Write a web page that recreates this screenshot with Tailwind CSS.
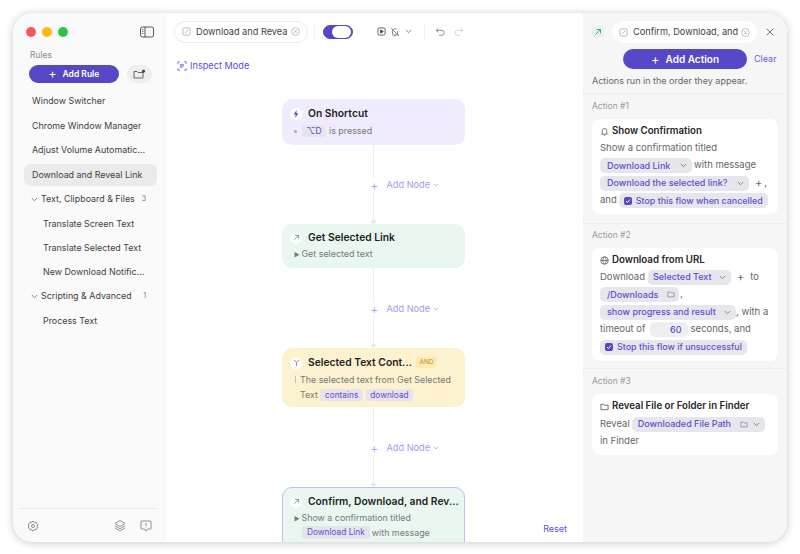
<!DOCTYPE html>
<html>
<head>
    <title>Flow editor</title>
    <script src="https://cdn.jsdelivr.net/npm/@tailwindcss/browser@4"></script>
</head>
<body class="bg-white">
<div class="w-[800px] h-[554px] pt-[13px] pr-[13px] pb-[12px] pl-[13px] font-['Inter','Liberation_Sans',sans-serif] text-[#3f3f3f] overflow-hidden">
<div class="flex h-[529px] rounded-[20px] overflow-hidden bg-white shadow-[0_1px_8px_rgba(0,0,0,0.22)]">

    <!-- sidebar -->
    <aside class="w-[150px] shrink-0 flex flex-col bg-[#fafafa] shadow-[1px_0_5px_rgba(0,0,0,0.07)] z-10">
        <div class="flex items-center h-[36px] pt-[1px] pl-[13px] pr-[9px]">
            <span class="w-[10px] h-[10px] rounded-full bg-[#f9555c]"></span>
            <span class="w-[10px] h-[10px] rounded-full bg-[#fdb90c] ml-[6px]"></span>
            <span class="w-[10px] h-[10px] rounded-full bg-[#2ec445] ml-[6px]"></span>
            <svg class="ml-auto" width="14" height="12" viewBox="0 0 14 12" fill="none" stroke="#555" stroke-width="1"><rect x="0.5" y="1" width="13" height="10" rx="2"/><path d="M5 1v10"/><path d="M2 3.5h1.5M2 5.500h1.500M2 7.500h1.500" stroke-width="0.8"/></svg>
        </div>
        <div class="text-[8.5px] leading-[12px] text-[#8a8a8a] pl-[17px]">Rules</div>
        <div class="flex items-center pl-[16px] mt-[4px]">
            <button class="w-[90px] h-[18px] rounded-full bg-[#5647c6] text-white text-[8.5px] font-semibold flex items-center justify-center gap-[6px]"><span class="text-[12px] font-normal leading-none">+</span>Add Rule</button>
            <div class="w-[25px] h-[18px] ml-[8px] rounded-full bg-[#eeeeee] flex items-center justify-center">
                <svg width="13" height="10" viewBox="0 0 13 10" fill="none" stroke="#444" stroke-width="0.8"><path d="M1 2.500V9h9V3.500H5L4 2.500H1z"/><circle cx="10.500" cy="2.200" r="1.200" fill="#444"/></svg>
            </div>
        </div>
        <nav class="mt-[6px] pl-[11px] pr-[6px] text-[8.9px] leading-[24.5px] whitespace-nowrap">
            <div class="pl-[8px]">Window Switcher</div>
            <div class="pl-[8px]">Chrome Window Manager</div>
            <div class="pl-[8px]">Adjust Volume Automatic...</div>
            <div class="pl-[8px] h-[22px] leading-[22px] mt-[1px] rounded-[6px] bg-[#ebebeb]">Download and Reveal Link</div>
            <div class="flex items-center h-[24px] mt-[2px] pl-[7px] pr-[11px]">
                <svg width="7" height="5" viewBox="0 0 7 5" fill="none" stroke="#777" stroke-width="0.9"><path d="M.8 1l2.700 2.700L6.200 1"/></svg>
                <span class="ml-[3px]">Text, Clipboard &amp; Files</span>
                <span class="ml-auto text-[7px] text-[#777]">3</span>
            </div>
            <div class="pl-[19px] h-[24px]">Translate Screen Text</div>
            <div class="pl-[19px] h-[24px]">Translate Selected Text</div>
            <div class="pl-[19px] h-[24px]">New Download Notific...</div>
            <div class="flex items-center h-[25px] pl-[7px] pr-[11px]">
                <svg width="7" height="5" viewBox="0 0 7 5" fill="none" stroke="#777" stroke-width="0.9"><path d="M.8 1l2.700 2.700L6.200 1"/></svg>
                <span class="ml-[3px]">Scripting &amp; Advanced</span>
                <span class="ml-auto text-[7px] text-[#777]">1</span>
            </div>
            <div class="pl-[19px] h-[24px]">Process Text</div>
        </nav>
        <div class="mt-auto h-[34px] mx-[6px] border-t border-[#ececec] flex items-center pl-[8px] pr-[5px] text-[#666]">
            <svg width="12" height="12" viewBox="0 0 24 24" fill="none" stroke="#777" stroke-width="1.6"><circle cx="12" cy="12" r="3"/><path d="M12 2l2.200 2.600 3.400-.5 1 3.300 3.100 1.400-1.200 3.200 1.200 3.200-3.100 1.400-1 3.300-3.400-.5L12 22l-2.200-2.600-3.400.5-1-3.300-3.100-1.400 1.200-3.200-1.200-3.200 3.100-1.400 1-3.300 3.400.5z"/></svg>
            <svg class="ml-auto" width="12" height="13" viewBox="0 0 24 24" fill="none" stroke="#777" stroke-width="1.6"><path d="M12 2L2 8l10 6 10-6z"/><path d="M2 12.500l10 6 10-6M2 17l10 6 10-6"/></svg>
            <svg class="ml-[14px]" width="12" height="12" viewBox="0 0 24 24" fill="none" stroke="#777" stroke-width="1.6"><path d="M3 2h18a1 1 0 0 1 1 1v14a1 1 0 0 1-1 1h-6l-3 4-3-4H3a1 1 0 0 1-1-1V3a1 1 0 0 1 1-1z"/><path d="M12 6v6M12 14.500v1"/></svg>
        </div>
    </aside>

    <!-- canvas -->
    <main class="w-[420px] shrink-0 relative bg-white">
        <div class="flex items-center h-[36px] pt-[1px] pl-[11px]">
            <div class="w-[134px] h-[22px] rounded-full border border-[#ececec] flex items-center pl-[7px] pr-[7px] text-[9.2px]">
                <svg width="9" height="9" viewBox="0 0 10 10" fill="none" stroke="#aaa" stroke-width="0.9"><rect x="1" y="1" width="8" height="8" rx="1.500"/><path d="M3.500 6.500L7 3"/></svg>
                <span class="ml-[5px] whitespace-nowrap">Download and Revea</span>
                <svg class="ml-auto" width="9" height="9" viewBox="0 0 10 10" fill="none" stroke="#aaa" stroke-width="0.8"><circle cx="5" cy="5" r="4.300"/><path d="M3.400 3.400l3.200 3.200M6.600 3.400L3.400 6.600"/></svg>
            </div>
            <span class="w-px h-[14px] bg-[#f3f3f3] ml-[6px]"></span>
            <div class="w-[30px] h-[14px] ml-[8px] rounded-full bg-[#5647c6] border border-[#5647c6] flex justify-end items-center pr-[1px]">
                <span class="w-[19px] h-[12px] rounded-full bg-white"></span>
            </div>
            <svg class="ml-[24px]" width="9" height="9" viewBox="0 0 10 10" fill="none" stroke="#444" stroke-width="0.9"><rect x="1" y="1" width="8" height="8" rx="1.500"/><path d="M4 3.200l3 1.800-3 1.800z" fill="#444"/></svg>
            <svg class="ml-[4px]" width="10" height="10" viewBox="0 0 24 24" fill="none" stroke="#666" stroke-width="1.800"><path d="M6 17V10a6 6 0 0 1 10-4.500M18 10v7l2 2H5M10 21h4M3 3l18 18"/></svg>
            <svg class="ml-[5px]" width="7" height="5" viewBox="0 0 7 5" fill="none" stroke="#777" stroke-width="0.9"><path d="M.8 1l2.700 2.700L6.200 1"/></svg>
            <span class="w-px h-[14px] bg-[#f0f0f0] ml-[12px]"></span>
            <svg class="ml-[10px]" width="10" height="10" viewBox="0 0 12 12" fill="none" stroke="#777" stroke-width="1"><path d="M4 1.500L1.500 4 4 6.500M1.500 4H8a3 3 0 0 1 0 6H5"/></svg>
            <svg class="ml-[9px]" width="10" height="10" viewBox="0 0 12 12" fill="none" stroke="#ccc" stroke-width="1"><path d="M8 1.500L10.500 4 8 6.500M10.500 4H4a3 3 0 0 0 0 6h3"/></svg>
        </div>
        <div class="flex items-center h-[14px] mt-[10px] pl-[14px] text-[9.2px] text-[#5b4fd0]">
            <svg width="10" height="10" viewBox="0 0 12 12" fill="none" stroke="#6a5fd8" stroke-width="1"><path d="M1 3.500V1h2.500M8.500 1H11v2.500M11 8.500V11H8.500M3.500 11H1V8.500"/><path d="M3.500 4.500h5M3.500 6h5M3.500 7.500h3"/></svg>
            <span class="ml-[3px]">Inspect Mode</span>
        </div>

        <!-- flow: nodes sit in one column with a connector between them -->
        <div class="flex flex-col items-center w-[183px] ml-[119px] mt-[26px]">
            <div class="w-full h-[46px] rounded-[10px] bg-[#f0ecfd] pt-[6px] pl-[8px]">
                <div class="flex items-center h-[17px]">
                    <span class="w-[12px] h-[12px] rounded-full bg-white flex items-center justify-center">
                        <svg width="6" height="8" viewBox="0 0 6 8"><path d="M3.600 0L.6 4.500h2L2.300 8l3.100-4.700h-2z" fill="#5b4fd0"/></svg>
                    </span>
                    <span class="ml-[6px] text-[10.300px] font-semibold text-[#1f1f1f]">On Shortcut</span>
                </div>
                <div class="flex items-center h-[14px] mt-[2px] text-[8.900px] text-[#777]">
                    <span class="w-[3px] h-[3px] ml-[4px] rounded-full bg-[#aaa]"></span>
                    <span class="ml-[5px] w-[24px] h-[12px] leading-[12px] rounded-[3px] bg-[#e6e4ec] text-center text-[#5b4fd0]">⌥D</span>
                    <span class="ml-[3px]">is pressed</span>
                </div>
            </div>
            <div class="relative w-full h-[79px]">
                <span class="absolute left-[91px] top-0 bottom-0 w-px bg-[#eeeeee]"></span>
                <span class="absolute left-[89px] bottom-[1px] w-[5px] h-[3px] rounded-full bg-[#e8e8e8]"></span>
                <div class="absolute left-[88px] top-[33px] flex items-center text-[9.200px] text-[#a39bec] bg-white h-[14px] whitespace-nowrap"><span class="text-[13px] font-light leading-none">+</span><span class="ml-[8px]">Add Node</span><svg class="ml-[3px]" width="6" height="4" viewBox="0 0 7 5" fill="none" stroke="#a39bec" stroke-width="0.9"><path d="M.8 1l2.700 2.700L6.200 1"/></svg></div>
            </div>
            <div class="w-full h-[44px] rounded-[10px] bg-[#e9f7f0] pt-[5px] pl-[8px]">
                <div class="flex items-center h-[17px]">
                    <span class="w-[12px] h-[12px] rounded-full bg-white flex items-center justify-center">
                        <svg width="7" height="7" viewBox="0 0 8 8" fill="none" stroke="#4a8f76" stroke-width="0.9"><path d="M1.500 6.500L6.500 1.500M2.500 1.500h4v4"/></svg>
                    </span>
                    <span class="ml-[6px] text-[10.300px] font-semibold text-[#1f1f1f]">Get Selected Link</span>
                </div>
                <div class="flex items-center h-[14px] mt-[1px] text-[8.900px] text-[#777]">
                    <span class="ml-[4px] text-[6px]">▶</span>
                    <span class="ml-[2px]">Get selected text</span>
                </div>
            </div>
            <div class="relative w-full h-[80px]">
                <span class="absolute left-[91px] top-0 bottom-0 w-px bg-[#eeeeee]"></span>
                <span class="absolute left-[89px] bottom-[1px] w-[5px] h-[3px] rounded-full bg-[#e8e8e8]"></span>
                <div class="absolute left-[88px] top-[34px] flex items-center text-[9.200px] text-[#a39bec] bg-white h-[14px] whitespace-nowrap"><span class="text-[13px] font-light leading-none">+</span><span class="ml-[8px]">Add Node</span><svg class="ml-[3px]" width="6" height="4" viewBox="0 0 7 5" fill="none" stroke="#a39bec" stroke-width="0.9"><path d="M.8 1l2.700 2.700L6.200 1"/></svg></div>
            </div>
            <div class="w-full h-[59px] rounded-[10px] bg-[#fdf2d0] pt-[6px] pl-[8px] pr-[6px]">
                <div class="flex items-center h-[17px]">
                    <span class="w-[12px] h-[12px] rounded-full bg-white flex items-center justify-center">
                        <svg width="7" height="7" viewBox="0 0 8 8" fill="none" stroke="#a0584a" stroke-width="0.9"><path d="M1 1l3 3 3-3M4 4v4"/></svg>
                    </span>
                    <span class="ml-[6px] text-[10.300px] font-semibold text-[#1f1f1f] whitespace-nowrap">Selected Text Cont...</span>
                    <span class="ml-[4px] w-[21px] h-[11px] leading-[11px] rounded-[3px] bg-[#fdeab0] text-center text-[6.500px] text-[#b7922f]">AND</span>
                </div>
                <div class="flex items-center h-[15px] mt-[1px] text-[8.900px] text-[#777] whitespace-nowrap">
                    <span class="w-px h-[7px] ml-[5px] bg-[#c9c0a6]"></span>
                    <span class="ml-[4px]">The selected text from Get Selected</span>
                </div>
                <div class="flex items-center h-[15px] text-[8.900px] text-[#777] pl-[10px]">
                    <span>Text</span>
                    <span class="ml-[2px] px-[5px] h-[12px] leading-[12px] rounded-[3px] bg-[#e8e3ea] text-[8.300px] text-[#5b4fd0]">contains</span>
                    <span class="ml-[3px] px-[4px] h-[12px] leading-[12px] rounded-[3px] bg-[#e8e3ea] text-[8.300px] text-[#5b4fd0]">download</span>
                </div>
            </div>
            <div class="relative w-full h-[80px]">
                <span class="absolute left-[91px] top-0 bottom-0 w-px bg-[#eeeeee]"></span>
                <span class="absolute left-[89px] bottom-[1px] w-[5px] h-[3px] rounded-full bg-[#e8e8e8]"></span>
                <div class="absolute left-[88px] top-[34px] flex items-center text-[9.200px] text-[#a39bec] bg-white h-[14px] whitespace-nowrap"><span class="text-[13px] font-light leading-none">+</span><span class="ml-[8px]">Add Node</span><svg class="ml-[3px]" width="6" height="4" viewBox="0 0 7 5" fill="none" stroke="#a39bec" stroke-width="0.9"><path d="M.8 1l2.700 2.700L6.200 1"/></svg></div>
            </div>
            <div class="w-full h-[70px] rounded-[10px] bg-[#e9f7f0] border border-[#b6c3e8] pt-[5px] pl-[7px] pr-[3px]">
                <div class="flex items-center h-[17px]">
                    <span class="w-[12px] h-[12px] rounded-full bg-white flex items-center justify-center">
                        <svg width="7" height="7" viewBox="0 0 8 8" fill="none" stroke="#4a8f76" stroke-width="0.9"><path d="M1.500 6.500L6.500 1.500M2.500 1.500h4v4"/></svg>
                    </span>
                    <span class="ml-[6px] text-[10.300px] font-semibold text-[#1f1f1f] whitespace-nowrap">Confirm, Download, and Rev...</span>
                </div>
                <div class="flex items-center h-[14px] mt-[1px] text-[8.900px] text-[#777]">
                    <span class="ml-[4px] text-[6px]">▶</span>
                    <span class="ml-[2px]">Show a confirmation titled</span>
                </div>
                <div class="flex items-center h-[15px] text-[8.900px] text-[#777] pl-[12px]">
                    <span class="px-[5px] h-[13px] leading-[13px] rounded-[3px] bg-[#e5e3ee] text-[8.300px] text-[#5b4fd0]">Download Link</span>
                    <span class="ml-[2px]">with message</span>
                </div>
            </div>
        </div>
        <span class="absolute right-[16px] bottom-[7px] text-[9px] text-[#5b4fd0]">Reset</span>
    </main>

    <!-- actions panel -->
    <section class="flex-1 bg-[#f6f6f6] shadow-[-1px_0_2px_rgba(0,0,0,0.03)] px-[9px] text-[9.500px] text-[#666]">
        <div class="flex items-center h-[22px] mt-[8px] -mr-[2px]">
            <span class="w-[12px] h-[12px] shrink-0 rounded-[3px] bg-[#e6f4ed] flex items-center justify-center">
                <svg width="8" height="8" viewBox="0 0 8 8" fill="none" stroke="#3f9a78" stroke-width="0.9"><path d="M1.500 6.500L6.500 1.500M2.500 1.500h4v4"/></svg>
            </span>
            <div class="w-[145px] h-[22px] ml-[8px] rounded-full bg-white flex items-center pl-[7px] pr-[7px] text-[9.200px] text-[#3f3f3f]">
                <svg width="9" height="9" viewBox="0 0 10 10" fill="none" stroke="#aaa" stroke-width="0.9"><rect x="1" y="1" width="8" height="8" rx="1.500"/><path d="M3.500 6.500L7 3"/></svg>
                <span class="ml-[5px] whitespace-nowrap">Confirm, Download, and</span>
                <svg class="ml-auto" width="9" height="9" viewBox="0 0 10 10" fill="none" stroke="#aaa" stroke-width="0.8"><circle cx="5" cy="5" r="4.300"/><path d="M3.400 3.400l3.200 3.200M6.600 3.400L3.400 6.600"/></svg>
            </div>
            <svg class="ml-[9px]" width="8" height="8" viewBox="0 0 8 8" fill="none" stroke="#666" stroke-width="0.9"><path d="M.7.7l6.600 6.600M7.300.7L.7 7.300"/></svg>
        </div>
        <div class="flex items-center h-[20px] mt-[6px]">
            <button class="w-[124px] h-[20px] ml-[31px] rounded-full bg-[#5647c6] text-white text-[10px] font-semibold flex items-center justify-center gap-[6px]"><span class="text-[13px] font-normal leading-none">+</span>Add Action</button>
            <span class="ml-[7px] text-[9px] text-[#6a5fd8]">Clear</span>
        </div>
        <div class="h-[14px] leading-[14px] mt-[5px] text-[9px]">Actions run in the order they appear.</div>
        <div class="border-t border-[#ededed] mt-[5px] -mx-[9px]"></div>

        <div class="text-[8.500px] leading-[12px] mt-[6px] text-[#999]">Action #1</div>
        <div class="bg-white rounded-[8px] mt-[7px] h-[95px] px-[8px] pt-[4px]">
            <div class="flex items-center h-[16px] text-[9.700px] font-semibold text-[#262626]">
                <svg width="9" height="9" viewBox="0 0 24 24" fill="none" stroke="#555" stroke-width="2"><path d="M6 17v-7a6 6 0 0 1 12 0v7l2 2H4zM10 22h4"/></svg>
                <span class="ml-[3px]">Show Confirmation</span>
            </div>
            <div class="flex items-center h-[18px] pt-[1px]">Show a confirmation titled</div>
            <div class="flex items-center h-[17px]">
                <span class="flex items-center w-[92px] h-[15px] rounded-[5px] bg-[#e7e6ec] pl-[7px] pr-[5px] text-[9px] font-medium text-[#5b4fd0]">Download Link<svg class="ml-auto" width="7" height="5" viewBox="0 0 7 5" fill="none" stroke="#777" stroke-width="0.9"><path d="M.8 1l2.700 2.700L6.200 1"/></svg></span>
                <span class="ml-[2px]">with message</span>
            </div>
            <div class="flex items-center h-[18px]">
                <span class="flex items-center w-[149px] h-[15px] rounded-[5px] bg-[#e7e6ec] pl-[7px] pr-[5px] text-[9px] font-medium text-[#5b4fd0] whitespace-nowrap">Download the selected link?<svg class="ml-auto" width="7" height="5" viewBox="0 0 7 5" fill="none" stroke="#777" stroke-width="0.9"><path d="M.8 1l2.700 2.700L6.200 1"/></svg></span>
                <span class="ml-[6px] text-[11px] leading-none">+</span><span class="ml-[2px]">,</span>
            </div>
            <div class="flex items-center h-[17px]">
                <span>and</span>
                <span class="flex items-center h-[15px] ml-[2px] px-[5px] rounded-[5px] bg-[#e7e6ec] text-[8.900px] font-medium text-[#5b4fd0] whitespace-nowrap">
                    <span class="w-[8px] h-[8px] rounded-[2px] bg-[#5647c6] flex items-center justify-center"><svg width="6" height="6" viewBox="0 0 6 6" fill="none" stroke="#fff" stroke-width="1"><path d="M1 3l1.500 1.500L5 1.500"/></svg></span>
                    <span class="ml-[4px]">Stop this flow when cancelled</span>
                </span>
            </div>
        </div>
        <div class="border-t border-[#ededed] mt-[9px] -mx-[9px]"></div>

        <div class="text-[8.500px] leading-[12px] mt-[5px] text-[#999]">Action #2</div>
        <div class="bg-white rounded-[8px] mt-[7px] h-[113px] px-[8px] pt-[4px]">
            <div class="flex items-center h-[16px] text-[9.700px] font-semibold text-[#262626]">
                <svg width="9" height="9" viewBox="0 0 24 24" fill="none" stroke="#555" stroke-width="2"><circle cx="12" cy="12" r="10"/><path d="M2 12h20M12 2c-6 6-6 14 0 20M12 2c6 6 6 14 0 20"/></svg>
                <span class="ml-[3px]">Download from URL</span>
            </div>
            <div class="flex items-center h-[18px]">
                <span>Download</span>
                <span class="flex items-center w-[83px] h-[15px] ml-[3px] rounded-[5px] bg-[#e7e6ec] pl-[5px] pr-[5px] text-[9px] font-medium text-[#5b4fd0]">Selected Text<svg class="ml-auto" width="7" height="5" viewBox="0 0 7 5" fill="none" stroke="#777" stroke-width="0.9"><path d="M.8 1l2.700 2.700L6.200 1"/></svg></span>
                <span class="ml-[6px] text-[11px] leading-none">+</span><span class="ml-[6px]">to</span>
            </div>
            <div class="flex items-center h-[17px]">
                <span class="flex items-center w-[79px] h-[15px] rounded-[5px] bg-[#e7e6ec] pl-[7px] pr-[4px] text-[9px] font-medium text-[#5b4fd0]">/Downloads<svg class="ml-auto" width="8" height="7" viewBox="0 0 10 8" fill="none" stroke="#777" stroke-width="0.8"><path d="M1 1h3l1 1h4v5H1z"/></svg></span>
                <span class="ml-[1px]">,</span>
            </div>
            <div class="flex items-center h-[18px]">
                <span class="flex items-center w-[136px] h-[15px] rounded-[5px] bg-[#e7e6ec] pl-[7px] pr-[5px] text-[9px] font-medium text-[#5b4fd0] whitespace-nowrap">show progress and result<svg class="ml-auto" width="7" height="5" viewBox="0 0 7 5" fill="none" stroke="#777" stroke-width="0.9"><path d="M.8 1l2.700 2.700L6.200 1"/></svg></span>
                <span class="whitespace-nowrap">, with a</span>
            </div>
            <div class="flex items-center h-[17px]">
                <span>timeout of</span>
                <span class="w-[38px] h-[15px] leading-[15px] ml-[4px] pr-[6px] rounded-[5px] bg-[#eeeef1] text-right text-[9px] font-medium text-[#5b4fd0]">60</span>
                <span class="ml-[3px] whitespace-nowrap">seconds, and</span>
            </div>
            <div class="flex items-center h-[18px]">
                <span class="flex items-center h-[15px] px-[5px] rounded-[5px] bg-[#e7e6ec] text-[8.900px] font-medium text-[#5b4fd0] whitespace-nowrap">
                    <span class="w-[8px] h-[8px] rounded-[2px] bg-[#5647c6] flex items-center justify-center"><svg width="6" height="6" viewBox="0 0 6 6" fill="none" stroke="#fff" stroke-width="1"><path d="M1 3l1.500 1.500L5 1.500"/></svg></span>
                    <span class="ml-[4px]">Stop this flow if unsuccessful</span>
                </span>
            </div>
        </div>
        <div class="border-t border-[#ededed] mt-[7px] -mx-[9px]"></div>

        <div class="text-[8.500px] leading-[12px] mt-[6px] text-[#999]">Action #3</div>
        <div class="bg-white rounded-[8px] mt-[7px] h-[61px] px-[8px] pt-[4px]">
            <div class="flex items-center h-[17px] text-[9.700px] font-semibold text-[#262626]">
                <svg width="9" height="8" viewBox="0 0 10 8" fill="none" stroke="#555" stroke-width="0.9"><path d="M1 1h3l1 1h4v5H1z"/></svg>
                <span class="ml-[3px] whitespace-nowrap">Reveal File or Folder in Finder</span>
            </div>
            <div class="flex items-center h-[18px]">
                <span>Reveal</span>
                <span class="flex items-center w-[133px] h-[15px] ml-[2px] rounded-[5px] bg-[#e7e6ec] pl-[6px] pr-[5px] text-[9px] font-medium text-[#5b4fd0] whitespace-nowrap">Downloaded File Path<svg class="ml-auto" width="8" height="7" viewBox="0 0 10 8" fill="none" stroke="#777" stroke-width="0.8"><path d="M1 1h3l1 1h4v5H1z"/></svg><svg class="ml-[5px]" width="7" height="5" viewBox="0 0 7 5" fill="none" stroke="#777" stroke-width="0.9"><path d="M.8 1l2.700 2.700L6.200 1"/></svg></span>
            </div>
            <div class="flex items-center h-[17px]">in Finder</div>
        </div>
    </section>
</div>
</div>
</body>
</html>
